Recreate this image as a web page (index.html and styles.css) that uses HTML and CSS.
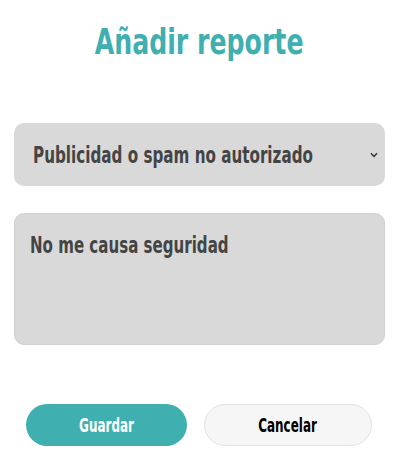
FILE: index.html
```html
<!DOCTYPE html>
<html lang="es">
<head>
<meta charset="utf-8">
<link rel="stylesheet" href="styles.css">
</head>
<body>
<div class="modal">
  <h1 class="title"><span class="sq sq-title">Añadir reporte</span></h1>
  <div class="select">
    <div class="select-text"><span class="sq sq-select">Publicidad o spam no autorizado</span></div>
    <svg class="chev" width="8" height="6" viewBox="0 0 8 6"><path d="M1 1.2 L4 4.4 L7 1.2" fill="none" stroke="#333" stroke-width="1.5"/></svg>
  </div>
  <div class="textarea"><span class="sq sq-area">No me causa seguridad</span></div>
  <div class="actions">
    <button class="btn btn-primary"><span class="sq sq-btn">Guardar</span></button>
    <button class="btn btn-secondary"><span class="sq sq-btn">Cancelar</span></button>
  </div>
</div>
</body>
</html>
```
FILE: styles.css
```css
html, body { margin: 0; padding: 0; background: #fff; overflow: hidden; }
body { font-family: "DejaVu Sans", sans-serif; }
.sq { display: inline-block; white-space: nowrap; transform-origin: left center; }
.sq-title { transform: scaleX(0.70); transform-origin: center center; }
.sq-select { transform: scaleX(0.66); }
.sq-area { transform: scaleX(0.655); }
.sq-btn { transform: scaleX(0.63); transform-origin: center center; }
.modal { width: 404px; padding: 0 19px 0 14px; box-sizing: border-box; }
.title {
  margin: 0; padding-top: 19px; height: 123px; box-sizing: border-box;
  text-align: center; color: #40afb0; font-size: 36px; font-weight: 700;
  line-height: 46px;
}
.select {
  height: 63px; background: #d9d9d9; border-radius: 10px;
  display: flex; align-items: center;
  padding: 0 7px 0 19px; box-sizing: border-box;
}
.select-text { flex: 1 1 0; min-width: 0; overflow: hidden; font-size: 23px; font-weight: 700; color: #444; }
.chev { flex: none; }
.textarea {
  margin-top: 27px; height: 132px; background: #d9d9d9; border-radius: 10px;
  border: 1px solid #d0d0d0; box-sizing: border-box; overflow: hidden;
  padding: 16px 15px; font-size: 23px; line-height: 30px; font-weight: 700; color: #444;
}
.actions { display: flex; gap: 17px; padding: 59px 0 0 12px; }
.btn {
  height: 42px; border-radius: 21px; font-family: inherit; font-size: 19px;
  font-weight: 700; cursor: pointer; padding: 0;
}
.btn-primary { width: 161px; background: #40afb0; color: #fff; border: none; }
.btn-secondary { width: 168px; background: #f6f6f6; color: #000; border: 1px solid #e3e3e3; }
```
